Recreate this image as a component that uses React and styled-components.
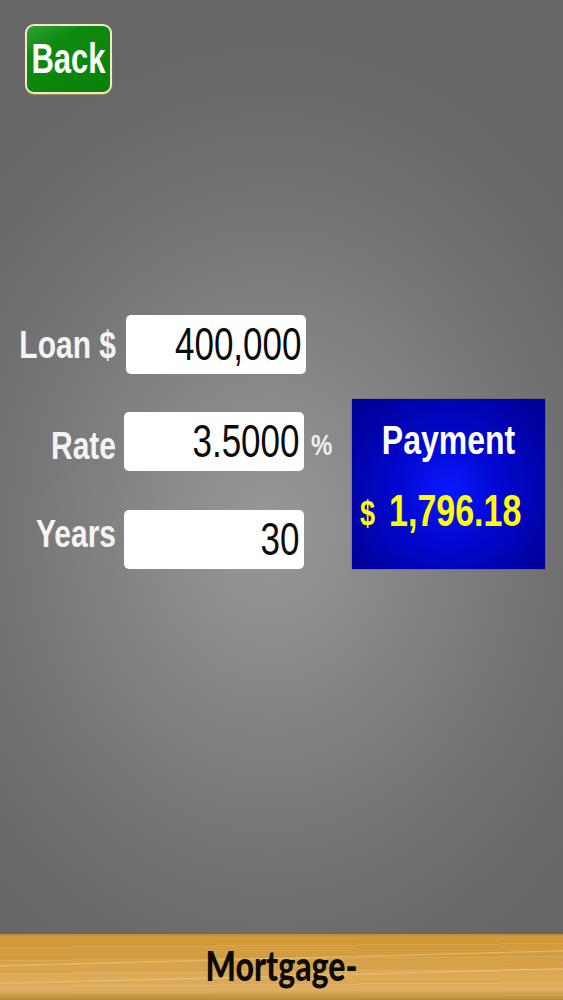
import styled, { createGlobalStyle } from "styled-components";

const GlobalStyle = createGlobalStyle`
	html, body {
		margin: 0;
		padding: 0;
		background: #666;
	}
`;

const Page = styled.div`
	width: 563px;
	height: 1000px;
	display: flex;
	flex-direction: column;
	overflow: hidden;
	font-family: "Liberation Sans", Arial, sans-serif;
	background: radial-gradient(ellipse 420px 520px at 270px 530px, #989898 0%, #8a8a8a 25%, #787878 55%, #696969 85%, #666 100%);
`;

const Header = styled.header`
	padding: 24px 0 0 25px;
`;

const BackButton = styled.button`
	width: 87px;
	height: 70px;
	padding: 0;
	box-sizing: border-box;
	border: 2px solid #efe9c8;
	border-radius: 9px;
	background: linear-gradient(150deg, #35a035 0%, #0f8a0f 28%, #078107 100%);
	box-shadow: 0 1px 1px #a08e60;
	color: #fff;
	font: bold 31px "Liberation Sans", Arial, sans-serif;
	cursor: pointer;
`;

const Tall = styled.span`
	display: inline-block;
	transform: scaleY(${(p) => p.$y || 1.32});
`;

const Content = styled.main`
	flex: 1;
	display: flex;
	align-items: flex-start;
	padding-top: 221px;
`;

const Form = styled.div`
	width: 352px;
	display: flex;
	flex-direction: column;
`;

const Row = styled.div`
	display: flex;
	align-items: flex-start;
	margin-top: ${(p) => p.$top || 0}px;
`;

const Label = styled.label`
	width: 116px;
	height: 59px;
	line-height: 59px;
	text-align: right;
	color: #f4f4f4;
	font-size: 30px;
	font-weight: bold;
	margin-top: ${(p) => p.$nudge || 0}px;
	margin-bottom: ${(p) => -(p.$nudge || 0)}px;
`;

const Field = styled.div`
	width: 180px;
	height: 59px;
	box-sizing: border-box;
	margin-left: ${(p) => p.$gap}px;
	padding-right: 4.5px;
	background: #fff;
	border-radius: 5px;
	color: #0a0a0a;
	font-size: 35px;
	line-height: 57px;
	text-align: right;
`;

const Unit = styled.span`
	margin: 14px 0 0 7px;
	color: #eee;
	font-size: 24px;
	font-weight: bold;
	line-height: 38px;
	transform: scaleY(1.2);
`;

const PaymentBox = styled.section`
	width: 193px;
	height: 170px;
	margin-top: 84px;
	display: flex;
	flex-direction: column;
	background: radial-gradient(circle 115px at 50% 54%, #0a18ff 0%, #0208d0 45%, #00009a 100%);
	box-shadow: 0 0 1px #334;
`;

const PaymentTitle = styled.div`
	margin-top: 21px;
	text-align: center;
	color: #fff;
	font-size: 32px;
	font-weight: bold;
	line-height: 40px;
`;

const PaymentAmount = styled.div`
	display: flex;
	align-items: baseline;
	margin-top: 30px;
	padding-left: 8px;
	gap: 14px;
	color: #ff0;
	font-weight: bold;
	line-height: 40px;
`;

const Currency = styled.span`
	font-size: 27px;
`;

const Amount = styled.span`
	font-size: 34px;
`;

const Footer = styled.footer`
	height: 66px;
	display: flex;
	justify-content: center;
	align-items: center;
	padding-bottom: 6px;
	box-sizing: border-box;
	color: #0a0a0a;
	font-family: "Lato", "Liberation Sans", sans-serif;
	font-size: 32px;
	font-weight: 900;
	background:
		linear-gradient(180deg, #b98c3e 0, rgba(192, 138, 46, 0) 3px, rgba(192, 138, 46, 0) 56px, #b98a34 66px),
		linear-gradient(178.5deg, rgba(255, 240, 190, 0) 0 38%, rgba(255, 240, 190, 0.35) 39%, rgba(255, 240, 190, 0) 41% 60%, rgba(255, 240, 190, 0.3) 61%, rgba(255, 240, 190, 0) 63%),
		repeating-linear-gradient(179.6deg, rgba(255, 236, 180, 0.14) 0 1px, rgba(255, 236, 180, 0) 1px 9px, rgba(190, 130, 30, 0.1) 9px 13px),
		linear-gradient(180deg, #d09838 0%, #d49f44 35%, #dcaa58 65%, #e2b36a 100%);
`;

const App = () => {
	return (
		<>
			<GlobalStyle />
			<Page>
				<Header>
					<BackButton>
						<Tall $y={1.4}>Back</Tall>
					</BackButton>
				</Header>
				<Content>
					<Form>
						<Row>
							<Label>
								<Tall $y={1.3}>Loan $</Tall>
							</Label>
							<Field $gap={10}>
								<Tall>400,000</Tall>
							</Field>
						</Row>
						<Row $top={38}>
							<Label $nudge={4}>
								<Tall $y={1.3}>Rate</Tall>
							</Label>
							<Field $gap={8}>
								<Tall>3.5000</Tall>
							</Field>
							<Unit>%</Unit>
						</Row>
						<Row $top={39}>
							<Label $nudge={-6}>
								<Tall $y={1.3}>Years</Tall>
							</Label>
							<Field $gap={8}>
								<Tall>30</Tall>
							</Field>
						</Row>
					</Form>
					<PaymentBox>
						<PaymentTitle>
							<Tall $y={1.25}>Payment</Tall>
						</PaymentTitle>
						<PaymentAmount>
							<Currency>
								<Tall $y={1.3}>$</Tall>
							</Currency>
							<Amount>
								<Tall $y={1.3}>1,796.18</Tall>
							</Amount>
						</PaymentAmount>
					</PaymentBox>
				</Content>
				<Footer>
					<Tall $y={1.3}>Mortgage-</Tall>
				</Footer>
			</Page>
		</>
	);
};

export default App;
